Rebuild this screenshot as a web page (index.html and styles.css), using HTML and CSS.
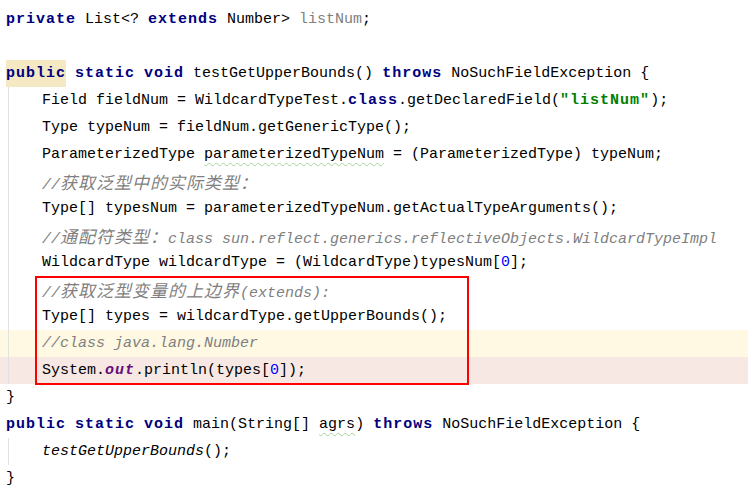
FILE: index.html
```html
<!DOCTYPE html>
<html lang="zh">
<head>
<meta charset="utf-8">
<title>WildcardTypeTest</title>
<link rel="stylesheet" href="styles.css">
</head>
<body>
<div class="editor">
  <div class="line"><span class="kw">private</span> List&lt;? <span class="kw">extends</span> Number&gt; <span class="unused">listNum</span>;</div>
  <div class="line"></div>
  <div class="line"><span class="kw hl">public</span> <span class="kw">static</span> <span class="kw">void</span> testGetUpperBounds() <span class="kw">throws</span> NoSuchFieldException {</div>
  <div class="body">
    <div class="line">    Field fieldNum = WildcardTypeTest.<span class="kw">class</span>.getDeclaredField(<span class="str">"listNum"</span>);</div>
    <div class="line">    Type typeNum = fieldNum.getGenericType();</div>
    <div class="line">    ParameterizedType <span class="warn">parameterizedTypeNum</span> = (ParameterizedType) typeNum;</div>
    <div class="line">    <span class="cmt">//<span class="cjk">获取泛型中的实际类型：</span></span></div>
    <div class="line">    Type[] typesNum = parameterizedTypeNum.getActualTypeArguments();</div>
    <div class="line">    <span class="cmt">//<span class="cjk">通配符类型：</span>class sun.reflect.generics.reflectiveObjects.WildcardTypeImpl</span></div>
    <div class="line">    WildcardType wildcardType = (WildcardType)typesNum[<span class="num">0</span>];</div>
    <div class="marked">
      <div class="line">    <span class="cmt">//<span class="cjk">获取泛型变量的上边界</span>(extends):</span></div>
      <div class="line">    Type[] types = wildcardType.getUpperBounds();</div>
      <div class="line caret">    <span class="cmt">//class java.lang.Number</span></div>
      <div class="line err">    System.<span class="sfield">out</span>.println(types[<span class="num">0</span>]);</div>
    </div>
  </div>
  <div class="line">}</div>
  <div class="line"><span class="kw">public</span> <span class="kw">static</span> <span class="kw">void</span> main(String[] <span class="warn">agrs</span>) <span class="kw">throws</span> NoSuchFieldException {</div>
  <div class="body">
    <div class="line">    <span class="scall">testGetUpperBounds</span>();</div>
  </div>
  <div class="line">}</div>
</div>
</body>
</html>
```

FILE: styles.css
```css
html, body {
  margin: 0;
  padding: 0;
  background: #ffffff;
}

.editor {
  width: 748px;
  height: 494px;
  overflow: hidden;
  padding-top: 6px;
  box-sizing: border-box;
  font-family: "Liberation Mono", "Noto Sans CJK SC", monospace;
  font-size: 15px;
  color: #000000;
}

.line {
  height: 27px;
  line-height: 28px;
  padding-left: 6px;
  white-space: pre;
}

.kw {
  color: #000080;
  font-weight: bold;
  letter-spacing: 1px;
}

.hl {
  display: inline-block;
  background: #f4e9c2;
  height: 27px;
}

.unused {
  color: #808080;
}

.str {
  color: #008000;
  font-weight: bold;
  letter-spacing: 1px;
}

.num {
  color: #0000ff;
}

.cmt {
  color: #808080;
  font-style: italic;
}

.cjk {
  font-family: "Noto Sans CJK SC", sans-serif;
  font-size: 17px;
  letter-spacing: 1px;
}

.sfield {
  color: #660e7a;
  font-weight: bold;
  font-style: italic;
  letter-spacing: 1px;
}

.scall {
  font-style: italic;
}

.warn {
  text-decoration-line: underline;
  text-decoration-style: wavy;
  text-decoration-color: #a9d39e;
  text-decoration-thickness: 1px;
  text-underline-offset: 4px;
}

.caret {
  background: #fff8e2;
}

.err {
  background: #f7e8e4;
}

.body {
  position: relative;
}

.body::before {
  content: "";
  position: absolute;
  left: 8px;
  top: 0;
  bottom: 0;
  width: 1px;
  background: #e2e2e2;
  z-index: 1;
}

.marked {
  position: relative;
}

.marked::after {
  content: "";
  position: absolute;
  left: 35px;
  top: 0;
  width: 434px;
  height: 109px;
  border: 2px solid #ff0000;
  box-sizing: border-box;
  z-index: 2;
}
```
